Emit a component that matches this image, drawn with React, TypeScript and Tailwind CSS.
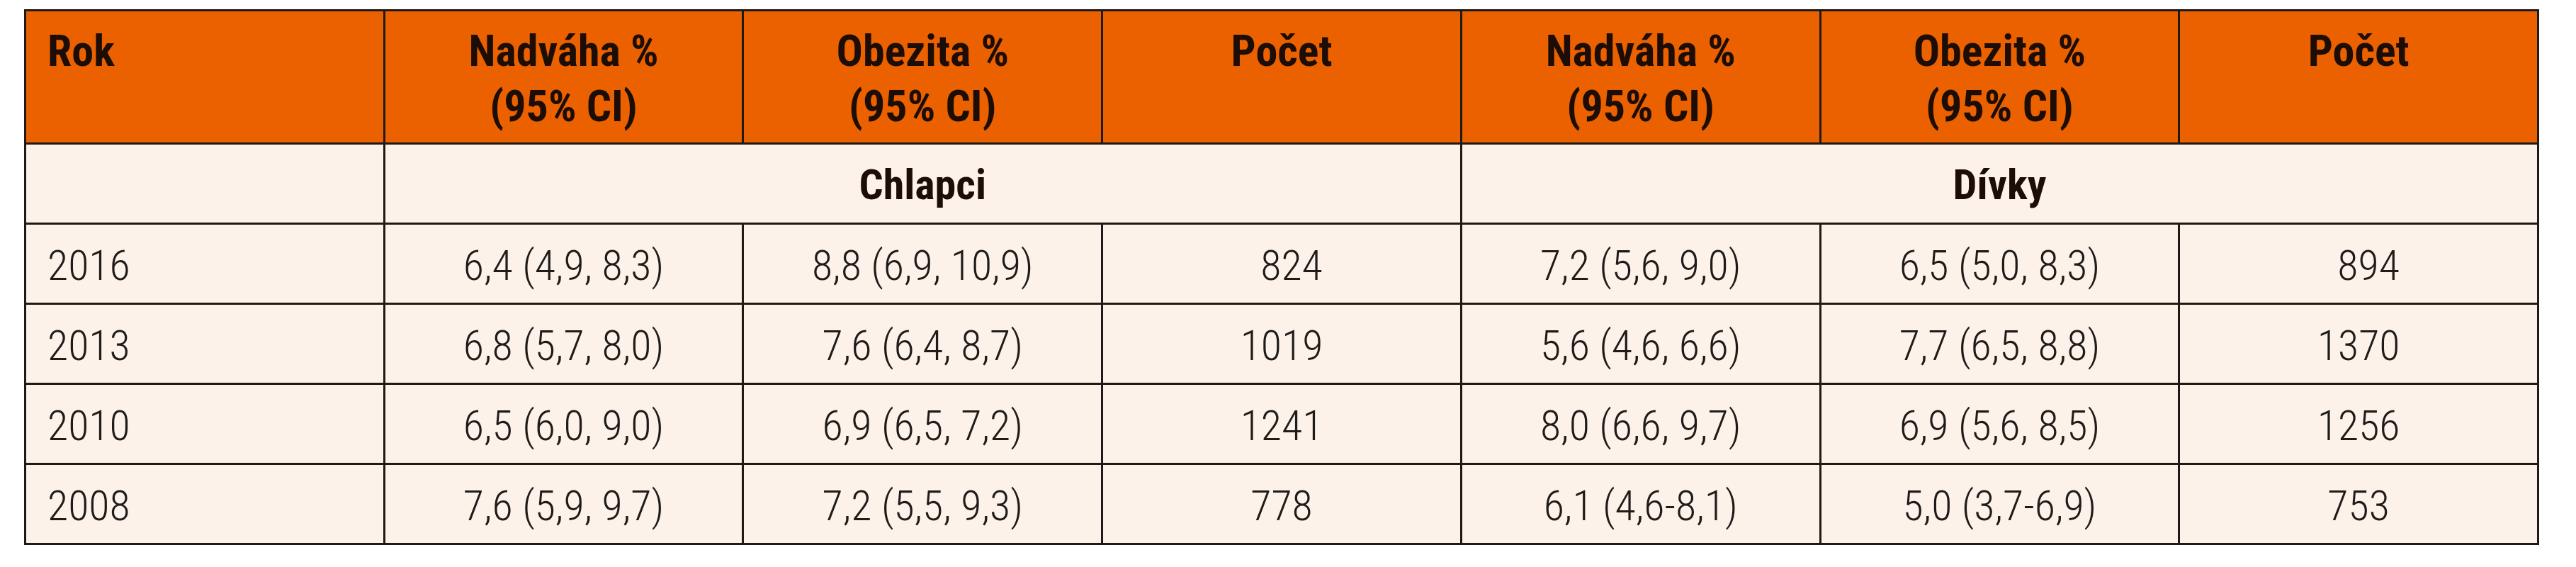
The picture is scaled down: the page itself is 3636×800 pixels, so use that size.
import React from 'react';

const head = "font-['Liberation_Sans_Narrow','Roboto_Condensed','DejaVu_Sans_Condensed',sans-serif] font-bold text-[62px] leading-[78px] text-[#1c0d06]";
const body = "font-['Roboto_Condensed','Liberation_Sans_Narrow','DejaVu_Sans_Condensed',sans-serif] font-light text-[60px] leading-none text-[#1e1b1a]";
const line = 'border-r-[3px] border-b-[3px] border-[#1f1a17]';

const rows = [
  ['2016', '6,4 (4,9, 8,3)', '8,8 (6,9, 10,9)', '824', '7,2 (5,6, 9,0)', '6,5 (5,0, 8,3)', '894'],
  ['2013', '6,8 (5,7, 8,0)', '7,6 (6,4, 8,7)', '1019', '5,6 (4,6, 6,6)', '7,7 (6,5, 8,8)', '1370'],
  ['2010', '6,5 (6,0, 9,0)', '6,9 (6,5, 7,2)', '1241', '8,0 (6,6, 9,7)', '6,9 (5,6, 8,5)', '1256'],
  ['2008', '7,6 (5,9, 9,7)', '7,2 (5,5, 9,3)', '778', '6,1 (4,6-8,1)', '5,0 (3,7-6,9)', '753'],
];

const HeadCell: React.FC<{ children: React.ReactNode; left?: boolean }> = ({ children, left }) => (
  <div className={`h-[188px] bg-[#eb6100] pt-[17px] ${line} ${left ? 'pl-[30px] text-left' : 'text-center'}`}>
    {children}
  </div>
);

const App: React.FC = () => {
  return (
    <div className="min-h-[800px] bg-white pt-[13px] pl-[34px]">
      <div className={`grid w-[3550px] grid-cols-7 border-l-[3px] border-t-[3px] border-[#1f1a17] bg-[#fdf2e9] ${head}`}>
        <HeadCell left>Rok</HeadCell>
        <HeadCell>Nadváha %<br />(95% CI)</HeadCell>
        <HeadCell>Obezita %<br />(95% CI)</HeadCell>
        <HeadCell>Počet</HeadCell>
        <HeadCell>Nadváha %<br />(95% CI)</HeadCell>
        <HeadCell>Obezita %<br />(95% CI)</HeadCell>
        <HeadCell>Počet</HeadCell>

        <div className={`h-[113px] ${line}`}></div>
        <div className={`col-span-3 flex h-[113px] items-center justify-center pt-[4px] text-[60px] leading-none ${line}`}>Chlapci</div>
        <div className={`col-span-3 flex h-[113px] items-center justify-center pt-[4px] text-[60px] leading-none ${line}`}>Dívky</div>

        {rows.map((r) =>
          r.map((v, i) => (
            <div
              key={r[0] + i}
              className={`flex h-[113px] items-center pt-[6px] ${body} ${line} ${
                i === 0 ? 'justify-start pl-[30px]' : 'justify-center'
              } ${(v === '824' || v === '894') ? 'pl-[28px]' : ''}`}
            >
              {v}
            </div>
          ))
        )}
      </div>
    </div>
  );
};

export default App;
